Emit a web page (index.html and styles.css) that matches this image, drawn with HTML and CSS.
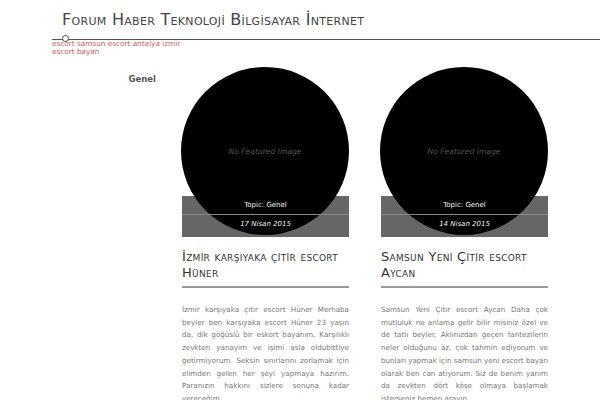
FILE: index.html
```html
<!DOCTYPE html>
<html lang="tr">
<head>
<meta charset="utf-8">
<title>Forum Haber Teknoloji Bilgisayar İnternet</title>
<link rel="stylesheet" href="styles.css">
</head>
<body>
<header class="site-header">
  <h1 class="site-title">Forum Haber Teknoloji Bilgisayar İnternet</h1>
  <div class="rule"><span class="dot"></span></div>
  <p class="tagline">escort samsun escort antalya izmir escort bayan</p>
</header>
<main class="main">
  <aside class="sidebar"><span class="cat">Genel</span></aside>
  <section class="posts">
    <article class="post">
      <div class="thumb"><span class="nofeat">No Featured Image</span></div>
      <div class="band">
        <div class="band-row topic">Topic: Genel</div>
        <div class="band-row date">17 Nisan 2015</div>
      </div>
      <h2 class="post-title">İzmir karşıyaka çitir escort Hüner</h2>
      <p class="excerpt">İzmir karşıyaka çıtır escort Hüner Merhaba beyler ben karşıyaka escort Hüner 23 yaşın da, dik göğüslü bir eskort bayanım. Karşılıklı zevkten yanayım ve işimi asla oldubittiye getirmiyorum. Seksin sınırlarını zorlamak için elimden gelen her şeyi yapmaya hazırım. Paranızın hakkını sizlere sonuna kadar vereceğim.</p>
    </article>
    <article class="post">
      <div class="thumb"><span class="nofeat">No Featured Image</span></div>
      <div class="band">
        <div class="band-row topic">Topic: Genel</div>
        <div class="band-row date">14 Nisan 2015</div>
      </div>
      <h2 class="post-title">Samsun Yeni Çitir escort Aycan</h2>
      <p class="excerpt">Samsun Yeni Çıtır escort Aycan Daha çok mutluluk ne anlama gelir bilir misiniz özel ve de tatlı beyler. Aklınızdan geçen fantezilerin neler olduğunu az, çok tahmin ediyorum ve bunları yapmak için samsun yeni escort bayan olarak ben can atıyorum. Siz de benim yanım da zevkten dört köşe olmaya başlamak isterseniz hemen arayın.</p>
    </article>
  </section>
</main>
</body>
</html>
```
FILE: styles.css
```css
html, body {
  margin: 0;
  padding: 0;
  background: #fff;
  font-family: "DejaVu Sans", Verdana, sans-serif;
}
.site-header {
  padding-left: 52px;
  padding-top: 8px;
}
.site-title {
  margin: 0 0 0 10px;
  font-size: 16px;
  font-weight: normal;
  font-variant: small-caps;
  color: #444;
  line-height: 24px;
  letter-spacing: 0.3px;
}
.rule {
  position: relative;
  height: 1px;
  margin-top: 7px;
  background: #555;
}
.dot {
  position: absolute;
  left: 10px;
  top: -4px;
  width: 5px;
  height: 5px;
  border: 1px solid #444;
  border-radius: 50%;
  background: #fff;
}
.tagline {
  margin: 0;
  width: 132px;
  font-size: 7.3px;
  line-height: 8px;
  color: #cc5a5a;
}
.main {
  display: flex;
  padding-top: 11px;
}
.sidebar {
  width: 156px;
  flex: none;
  text-align: right;
}
.cat {
  font-size: 8.5px;
  font-weight: bold;
  color: #555;
  line-height: 14px;
}
.posts {
  display: flex;
  gap: 31px;
  margin-left: 25px;
}
.post {
  width: 168px;
}
.thumb {
  position: relative;
  z-index: 1;
  width: 168px;
  height: 168px;
  border-radius: 50%;
  background: #000;
  display: flex;
  align-items: center;
  justify-content: center;
}
.nofeat {
  font-size: 7.6px;
  font-style: italic;
  color: #555;
}
.band {
  margin: -39px 0 0 1px;
  height: 41px;
  background: #666;
  color: #f4f4f4;
  font-size: 7px;
  text-align: center;
}
.band-row {
  position: relative;
  z-index: 2;
}
.topic {
  height: 18px;
  line-height: 18px;
}
.date {
  border-top: 1px solid #8a8a8a;
  height: 18px;
  line-height: 18px;
  font-style: italic;
}
.post-title {
  margin: 12px 0 0 1px;
  padding-bottom: 5px;
  border-bottom: 2px solid #999;
  font-size: 13px;
  font-weight: normal;
  font-variant: small-caps;
  line-height: 16px;
  color: #333;
  letter-spacing: 0.3px;
}
.excerpt {
  margin: 16px 0 0 1px;
  font-size: 7.15px;
  line-height: 12.7px;
  color: #777;
  text-align: justify;
}
```
